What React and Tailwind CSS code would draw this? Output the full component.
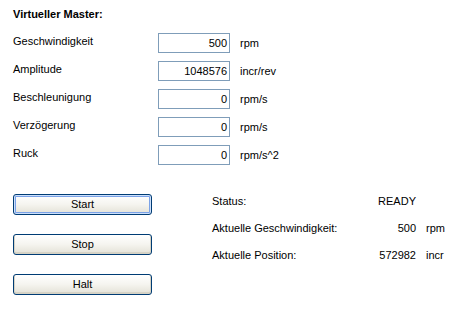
import React from "react";

const params = [
  { label: "Geschwindigkeit", value: "500", unit: "rpm" },
  { label: "Amplitude", value: "1048576", unit: "incr/rev" },
  { label: "Beschleunigung", value: "0", unit: "rpm/s" },
  { label: "Verzögerung", value: "0", unit: "rpm/s" },
  { label: "Ruck", value: "0", unit: "rpm/s^2" },
];

const status = [
  { label: "Status:", value: "READY", unit: "" },
  { label: "Aktuelle Geschwindigkeit:", value: "500", unit: "rpm" },
  { label: "Aktuelle Position:", value: "572982", unit: "incr" },
];

function XpButton({ children, isDefault }) {
  return (
    <button
      className={
        "w-[139px] h-[21px] rounded-[3px] border border-[#003c74] bg-gradient-to-b from-[#ffffff] via-[#f5f4ef] to-[#e3e1d6] text-[11px] leading-[13px] text-black " +
        (isDefault
          ? "shadow-[inset_0_0_0_1px_#cde0fb,inset_0_0_0_2px_#7ba2e7]"
          : "shadow-[inset_0_-1px_0_1px_#d6d3c6]")
      }
    >
      {children}
    </button>
  );
}

export default function App() {
  return (
    <div className="w-[467px] h-[309px] bg-white text-black text-[11px] leading-[13px] font-['Liberation_Sans',Arial,sans-serif] pt-[8px] pl-[13px]">
      {/* Kopf */}
      <div className="font-bold h-[25px]">Virtueller Master:</div>

      {/* Parameter */}
      <div className="flex flex-col">
        {params.map((p) => (
          <div key={p.label} className="flex items-start h-[28px]">
            <div className="w-[145px] pt-[2px]">{p.label}</div>
            <div className="w-[72px] h-[20px] border border-[#7f9db9] bg-white flex items-center justify-end pr-[2px]">
              {p.value}
            </div>
            <div className="h-[20px] flex items-center ml-[10px]">{p.unit}</div>
          </div>
        ))}
      </div>

      {/* Buttons + Status */}
      <div className="flex mt-[21px]">
        <div className="flex flex-col gap-[19px]">
          <XpButton isDefault>Start</XpButton>
          <XpButton>Stop</XpButton>
          <XpButton>Halt</XpButton>
        </div>
        <div className="ml-[60px] pt-[1px] flex flex-col">
          {status.map((s) => (
            <div key={s.label} className="flex h-[27px]">
              <div className="w-[130px]">{s.label}</div>
              <div className="w-[74px] text-right">{s.value}</div>
              <div className="ml-[10px]">{s.unit}</div>
            </div>
          ))}
        </div>
      </div>
    </div>
  );
}
